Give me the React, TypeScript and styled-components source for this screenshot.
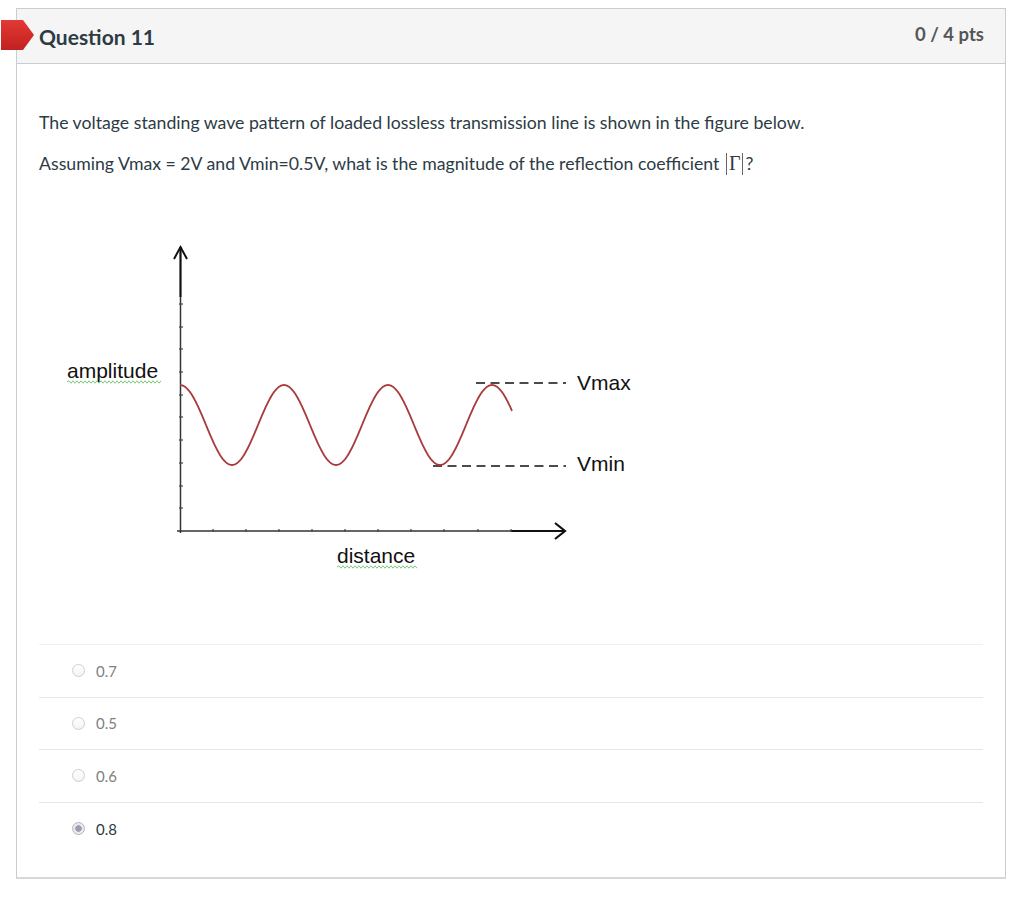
import React from "react";
import styled, { createGlobalStyle } from "styled-components";

const Global = createGlobalStyle`
  html, body { margin: 0; padding: 0; background: #fff; }
  body { font-family: Lato, "Noto Sans", sans-serif; color: #2d3b45; }
`;

const Page = styled.div`
  padding: 8px 18px 20px 16px;
`;

const Card = styled.div`
  position: relative;
  width: 990px;
  box-sizing: border-box;
  border: 1px solid #c7cdd1;
  border-bottom: 2px solid #d6d9dc;
`;

const Flag = styled.div`
  position: absolute;
  left: -16px;
  top: 11px;
  width: 33px;
  height: 30px;
  background: linear-gradient(180deg, #e23a36 0%, #cf2a27 60%, #c02222 100%);
  clip-path: polygon(0 0, 22px 0, 33px 15px, 22px 30px, 0 30px);
`;

const Header = styled.div`
  height: 55px;
  box-sizing: border-box;
  background: #f5f5f5;
  border-bottom: 1px solid #c7cdd1;
  display: flex;
  align-items: center;
  justify-content: space-between;
  padding: 0 21px 0 22px;
`;

const Title = styled.h2`
  margin: 0;
  font-size: 21px;
  font-weight: 700;
  color: #2d3b45;
`;

const Points = styled.div`
  font-size: 18.5px;
  font-weight: 700;
  color: #555;
  margin-top: -5px;
`;

const Body = styled.div`
  padding: 46px 22px 23px 22px;
`;

const Para = styled.p`
  margin: 0 0 14px;
  font-size: 17.7px;
  line-height: 26px;
  color: #2d3b45;
`;

const Gamma = styled.span`
  font-family: "Liberation Serif", serif;
  font-size: 20px;
  color: #2d3b45;
`;

const Bar = styled.span`
  display: inline-block;
  width: 1px;
  height: 22px;
  background: #666;
  vertical-align: -5px;
  margin: 0 2px;
`;

const Figure = styled.svg`
  display: block;
  margin: 56px 0 61px;
`;

const Answers = styled.div`
  display: flex;
  flex-direction: column;
`;

const Answer = styled.div<{ $first?: boolean }>`
  height: 52.6px;
  box-sizing: border-box;
  border-top: 1px solid ${(p) => (p.$first ? "#f0f0f0" : "#e6e6e6")};
  display: flex;
  align-items: center;
  padding-left: 33px;
  gap: 11px;
`;

const Radio = styled.span<{ $checked?: boolean }>`
  width: 11px;
  height: 11px;
  border-radius: 50%;
  border: 1px solid ${(p) => (p.$checked ? "#b5b5bd" : "#cfcfcf")};
  background: ${(p) =>
    p.$checked
      ? "radial-gradient(circle, #9d9db2 0 3px, #e9e9ee 3.5px)"
      : "linear-gradient(#fff, #f3f3f3)"};
  flex: none;
`;

const AnswerText = styled.span<{ $checked?: boolean }>`
  font-size: 15px;
  color: ${(p) => (p.$checked ? "#2d3b45" : "#808080")};
`;

const FigText = styled.text`
  font-family: "Liberation Sans", Arial, sans-serif;
  font-size: 21px;
  fill: #111;
`;

function squiggle(x1: number, x2: number, y: number) {
  let d = `M${x1} ${y}`;
  let up = true;
  for (let x = x1 + 2; x <= x2; x += 2) {
    d += ` L${x} ${up ? y - 1.2 : y + 1.2}`;
    up = !up;
  }
  return d;
}

function wave() {
  let d = "";
  for (let x = 180; x <= 512; x += 1) {
    const y = 424 - 40 * Math.cos((2 * Math.PI * (x - 180)) / 104);
    d += (x === 180 ? "M" : " L") + x + " " + y.toFixed(2);
  }
  return d;
}

const yTicks = [303, 326, 348, 371, 394, 416, 439, 462, 485, 507];
const xTicks = [213, 246, 279, 312, 345, 378, 411, 444, 478, 511];

const answers = [
  { v: "0.7", c: false },
  { v: "0.5", c: false },
  { v: "0.6", c: false },
  { v: "0.8", c: true },
];

export default function App() {
  return (
    <>
      <Global />
      <Page>
        <Card>
          <Flag />
          <Header>
            <Title>Question 11</Title>
            <Points>0 / 4 pts</Points>
          </Header>
          <Body>
            <Para>
              The voltage standing wave pattern of loaded lossless transmission line is shown in the figure below.
            </Para>
            <Para>
              Assuming Vmax = 2V and Vmin=0.5V, what is the magnitude of the reflection coefficient{" "}
              <Bar />
              <Gamma>Γ</Gamma>
              <Bar />?
            </Para>
            <Figure width="600" height="350" viewBox="0 0 600 350">
              <g transform="translate(-39,-232)">
                <line x1="180.5" y1="246" x2="180.5" y2="296" stroke="#111" strokeWidth="2.2" />
                <line x1="180.5" y1="296" x2="180.5" y2="532" stroke="#333" strokeWidth="1.5" />
                <polyline points="174,258 180.5,246 187,258" fill="none" stroke="#111" strokeWidth="2" />
                {yTicks.map((y) => (
                  <line key={y} x1="179" y1={y} x2="183" y2={y} stroke="#444" strokeWidth="1.2" />
                ))}
                <line x1="177" y1="530" x2="512" y2="530" stroke="#333" strokeWidth="1.6" />
                <line x1="511" y1="530" x2="564" y2="530" stroke="#111" strokeWidth="2.2" />
                <polyline points="555,522 565,530 555,538" fill="none" stroke="#111" strokeWidth="2.2" />
                {xTicks.map((x) => (
                  <line key={x} x1={x} y1="528" x2={x} y2="531" stroke="#444" strokeWidth="1.2" />
                ))}
                <line x1="476" y1="382" x2="566" y2="382" stroke="#111" strokeWidth="1.6" strokeDasharray="9 5.5" />
                <line x1="433" y1="465" x2="566" y2="465" stroke="#111" strokeWidth="1.6" strokeDasharray="9 5.5" />
                <path d={wave()} fill="none" stroke="#a83a3c" strokeWidth="1.8" />
                <FigText x="577" y="389">Vmax</FigText>
                <FigText x="577" y="470">Vmin</FigText>
                <FigText x="67" y="377">amplitude</FigText>
                <FigText x="337" y="562">distance</FigText>
                <path d={squiggle(67, 161, 381)} fill="none" stroke="#6cbf6c" strokeWidth="0.9" />
                <path d={squiggle(337, 417, 566)} fill="none" stroke="#6cbf6c" strokeWidth="0.9" />
              </g>
            </Figure>
            <Answers>
              {answers.map((a, i) => (
                <Answer key={a.v} $first={i === 0}>
                  <Radio $checked={a.c} />
                  <AnswerText $checked={a.c}>{a.v}</AnswerText>
                </Answer>
              ))}
            </Answers>
          </Body>
        </Card>
      </Page>
    </>
  );
}
